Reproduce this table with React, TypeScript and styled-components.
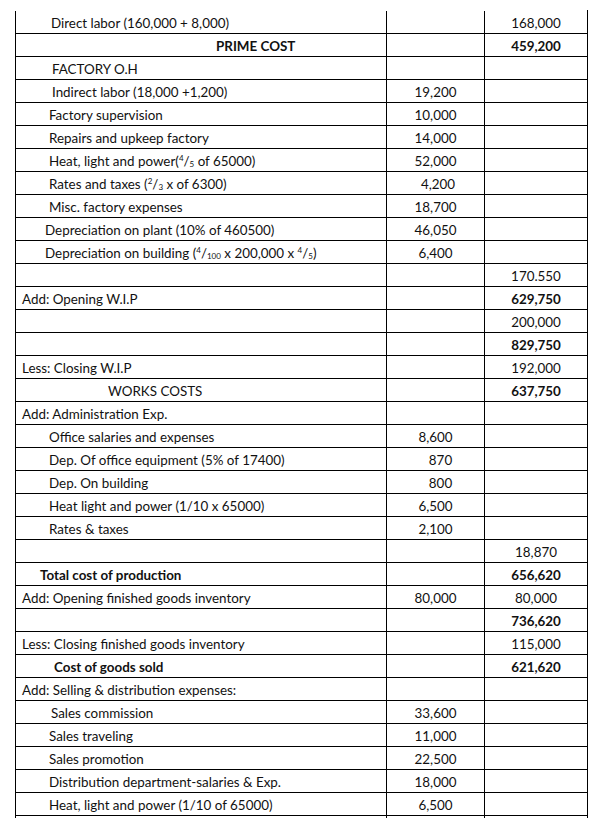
import { FC, ReactNode } from 'react';
import { styled, createGlobalStyle } from 'styled-components';

type Line = {
  label?: ReactNode;
  indent?: number;
  strong?: boolean;
  mid?: string;
  midShift?: number;
  total?: string;
  totalStrong?: boolean;
};

const Global = createGlobalStyle`
  html, body {
    margin: 0;
    padding: 0;
    background: #fff;
  }
  body {
    font-family: Lato, 'Open Sans', sans-serif;
    color: #111;
  }
`;

const Frac: FC<{ top: string; bottom: string }> = ({ top, bottom }) => (
  <>
    <Sup>{top}</Sup>/<Sub>{bottom}</Sub>
  </>
);

const lines: Line[] = [
  { label: 'Direct labor (160,000 + 8,000)', indent: 35, total: '168,000' },
  { label: 'PRIME COST', indent: 200, strong: true, total: '459,200', totalStrong: true },
  { label: 'FACTORY O.H', indent: 36 },
  { label: 'Indirect labor (18,000 +1,200)', indent: 36, mid: '19,200' },
  { label: 'Factory supervision', indent: 33, mid: '10,000' },
  { label: 'Repairs and upkeep factory', indent: 33, mid: '14,000' },
  {
    label: (
      <>
        Heat, light and power(<Frac top="4" bottom="5" /> of 65000)
      </>
    ),
    indent: 33,
    mid: '52,000',
  },
  {
    label: (
      <>
        Rates and taxes (<Frac top="2" bottom="3" /> x of 6300)
      </>
    ),
    indent: 33,
    mid: '4,200',
    midShift: 5,
  },
  { label: 'Misc. factory expenses', indent: 33, mid: '18,700' },
  { label: 'Depreciation on plant (10% of 460500)', indent: 29, mid: '46,050' },
  {
    label: (
      <>
        Depreciation on building (<Frac top="4" bottom="100" /> x 200,000 x{' '}
        <Frac top="4" bottom="5" />)
      </>
    ),
    indent: 29,
    mid: '6,400',
  },
  { total: '170.550' },
  { label: 'Add: Opening W.I.P', indent: 6, total: '629,750', totalStrong: true },
  { total: '200,000' },
  { total: '829,750', totalStrong: true },
  { label: 'Less: Closing W.I.P', indent: 6, total: '192,000' },
  { label: 'WORKS COSTS', indent: 92, total: '637,750', totalStrong: true },
  { label: 'Add: Administration Exp.', indent: 6 },
  { label: 'Office salaries and expenses', indent: 33, mid: '8,600' },
  { label: 'Dep. Of office equipment (5% of 17400)', indent: 33, mid: '870', midShift: 10 },
  { label: 'Dep. On building', indent: 33, mid: '800', midShift: 10 },
  { label: 'Heat light and power (1/10 x 65000)', indent: 33, mid: '6,500' },
  { label: 'Rates & taxes', indent: 33, mid: '2,100' },
  { total: '18,870' },
  {
    label: 'Total cost of production',
    indent: 24,
    strong: true,
    total: '656,620',
    totalStrong: true,
  },
  { label: 'Add: Opening finished goods inventory', indent: 6, mid: '80,000', total: '80,000' },
  { total: '736,620', totalStrong: true },
  { label: 'Less: Closing finished goods inventory', indent: 6, total: '115,000' },
  { label: 'Cost of goods sold', indent: 38, strong: true, total: '621,620', totalStrong: true },
  { label: 'Add: Selling & distribution expenses:', indent: 6 },
  { label: 'Sales commission', indent: 35, mid: '33,600' },
  { label: 'Sales traveling', indent: 33, mid: '11,000' },
  { label: 'Sales promotion', indent: 33, mid: '22,500' },
  { label: 'Distribution department-salaries & Exp.', indent: 33, mid: '18,000' },
  { label: 'Heat, light and power (1/10 of 65000)', indent: 33, mid: '6,500' },
];

export default function App() {
  return (
    <>
      <Global />
      <Sheet>
        {lines.map((l, i) => (
          <Row key={i}>
            <Label $indent={l.indent ?? 6} $strong={!!l.strong}>
              {l.label}
            </Label>
            <Amount $shift={l.midShift ?? 0}>{l.mid}</Amount>
            <Amount $strong={!!l.totalStrong}>{l.total}</Amount>
          </Row>
        ))}
        <Row $stub>
          <Label $indent={0} />
          <Amount />
          <Amount />
        </Row>
      </Sheet>
    </>
  );
}

const Sheet = styled.div`
  margin: 10px 0 0 15px;
  width: 573px;
  display: flex;
  flex-direction: column;
`;

const Row = styled.div<{ $stub?: boolean }>`
  display: grid;
  grid-template-columns: 371px 98px 103px;
  height: ${(p) => (p.$stub ? '2px' : '23px')};
  border-right: 1px solid #000;
  border-bottom: ${(p) => (p.$stub ? 'none' : '1px solid #000')};
  box-sizing: border-box;
  font-size: 13.4px;
  line-height: 22px;

  &:first-child {
    height: 24px;
    padding-top: 1px;
  }
`;

const Label = styled.div<{ $indent: number; $strong?: boolean }>`
  border-left: 1px solid #000;
  padding: 1px 0 0 ${(p) => p.$indent}px;
  font-weight: ${(p) => (p.$strong ? 700 : 400)};
  white-space: nowrap;
  overflow: hidden;
`;

const Amount = styled.div<{ $shift?: number; $strong?: boolean }>`
  border-left: 1px solid #000;
  text-align: center;
  padding: 1px 0 0 ${(p) => p.$shift ?? 0}px;
  font-weight: ${(p) => (p.$strong ? 700 : 400)};
  white-space: nowrap;
`;

const Sup = styled.sup`
  font-size: 8px;
  vertical-align: 5px;
  line-height: 0;
`;

const Sub = styled.sub`
  font-size: 8px;
  vertical-align: -1px;
  line-height: 0;
`;
